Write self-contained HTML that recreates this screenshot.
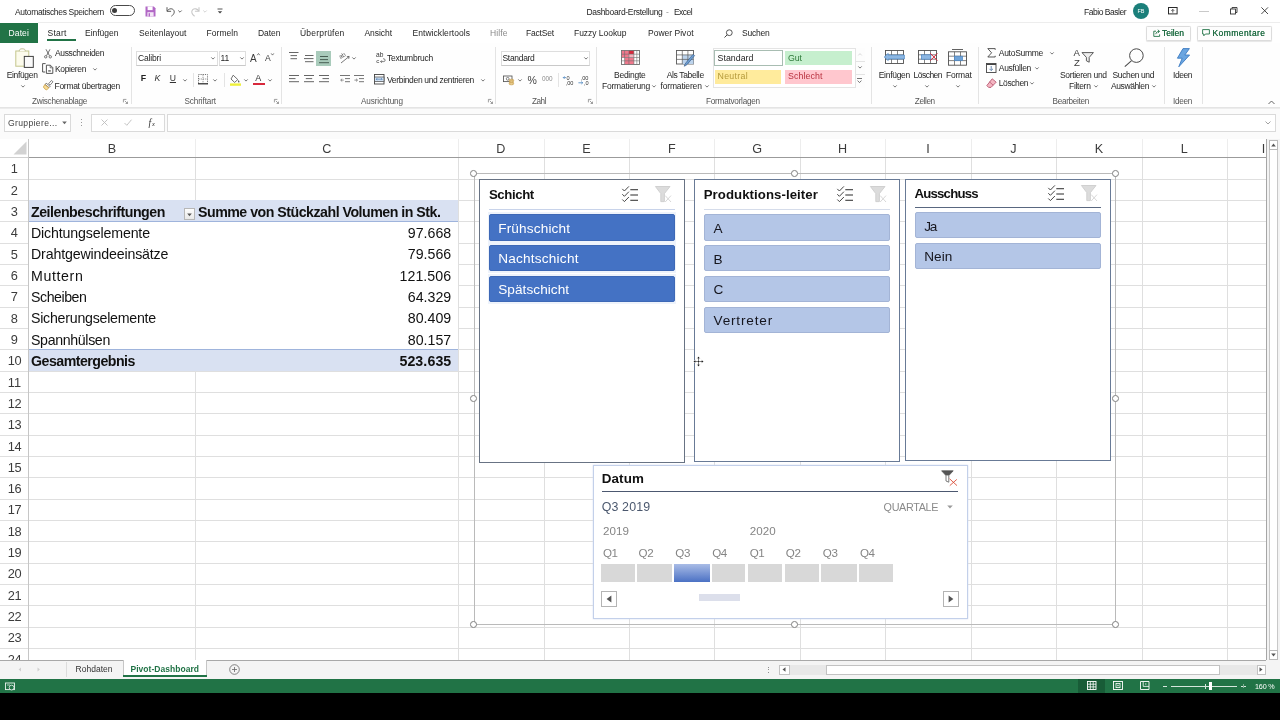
<!DOCTYPE html>
<html lang="de"><head><meta charset="utf-8"><title>Dashboard-Erstellung - Excel</title>
<style>
html,body{margin:0;padding:0;background:#fff;}
body{width:1280px;height:720px;overflow:hidden;position:relative;font-family:"Liberation Sans",sans-serif;}
#app{position:absolute;left:0;top:0;width:1280px;height:720px;overflow:hidden;background:#fff;will-change:transform;}
#app div,#app span.t,#app svg{position:absolute;box-sizing:border-box;}
#app span.t{white-space:nowrap;}
#app svg{overflow:visible;}
</style></head><body><div id="app">
<div style="left:0px;top:0px;width:1280px;height:22px;background:#fff;"></div>
<span class="t" style="left:15.00px;top:6.55px;font-size:8.5px;line-height:11px;color:#1f1f1f;letter-spacing:-0.321px;">Automatisches Speichern</span>
<div style="left:109.5px;top:5px;width:25px;height:11px;border:0.9px solid #4a4a4a;border-radius:6px;background:#fff;"></div>
<div style="left:112.3px;top:7.9px;width:5.2px;height:5.2px;background:#3c3c3c;border-radius:50%;"></div>
<svg style="left:145px;top:5.5px;" width="11" height="11" viewBox="0 0 11 11"><path d="M0.5 0.5H8.8L10.5 2.2V10.5H0.5Z" fill="#b268c6"/><rect x="2.6" y="0.5" width="5" height="3.6" fill="#fff"/><rect x="2.4" y="6.2" width="6.2" height="4.3" fill="#f3e6f6"/><rect x="3.6" y="7.2" width="1.4" height="3.3" fill="#b268c6"/></svg>
<svg style="left:164.5px;top:5.5px;" width="11" height="11" viewBox="0 0 11 11"><path d="M2 1.2V5.3H6.1" fill="none" stroke="#505050" stroke-width="0.95"/><path d="M2.2 5.1C3.6 2.6 6.6 2.1 8.3 3.7C10 5.4 9.4 8.2 6.4 10.2" fill="none" stroke="#505050" stroke-width="0.95"/></svg>
<svg style="left:177.5px;top:9.5px;" width="4" height="3" viewBox="0 0 4 3"><path d="M0.3 0.5L2 2.2L3.7 0.5" fill="none" stroke="#444" stroke-width="0.8"/></svg>
<svg style="left:189.5px;top:5.5px;" width="11" height="11" viewBox="0 0 11 11"><path d="M9 1.2V5.3H4.9" fill="none" stroke="#c8c8c8" stroke-width="1.1"/><path d="M8.8 5.1C7.4 2.6 4.4 2.1 2.7 3.7C1 5.4 1.6 8.2 4.6 10.2" fill="none" stroke="#c8c8c8" stroke-width="1.1"/></svg>
<svg style="left:203px;top:9.5px;" width="4" height="3" viewBox="0 0 4 3"><path d="M0.3 0.5L2 2.2L3.7 0.5" fill="none" stroke="#c8c8c8" stroke-width="0.8"/></svg>
<svg style="left:216.5px;top:7.5px;" width="6" height="7" viewBox="0 0 6 7"><path d="M0.5 1H5.5" stroke="#444" stroke-width="0.9"/><path d="M0.8 3.2L3 5.6L5.2 3.2Z" fill="#444"/></svg>
<span class="t" style="left:586.50px;top:6.55px;font-size:8.5px;line-height:11px;color:#1f1f1f;letter-spacing:-0.310px;">Dashboard-Erstellung</span>
<span class="t" style="left:666.00px;top:6.55px;font-size:8.5px;line-height:11px;color:#999;">-</span>
<span class="t" style="left:674.00px;top:6.55px;font-size:8.5px;line-height:11px;color:#1f1f1f;letter-spacing:-0.557px;">Excel</span>
<span class="t" style="left:1084.00px;top:6.55px;font-size:8.5px;line-height:11px;color:#1f1f1f;letter-spacing:-0.476px;">Fabio Basler</span>
<div style="left:1133px;top:3px;width:16px;height:16px;background:#1b7f7a;border-radius:50%;"></div>
<span class="t" style="left:1137.49px;top:7.70px;font-size:5.5px;line-height:7px;color:#fff;">FB</span>
<svg style="left:1167.5px;top:7px;" width="10" height="7.5" viewBox="0 0 10 7.5"><rect x="0.5" y="0.5" width="8.6" height="6.4" fill="none" stroke="#2a2a2a" stroke-width="1"/><path d="M4.8 5.6V2.6M3.4 3.8L4.8 2.4L6.2 3.8" fill="none" stroke="#2a2a2a" stroke-width="0.8"/></svg>
<div style="left:1199px;top:11px;width:9.5px;height:1.2px;background:#c9c9c9;"></div>
<svg style="left:1230px;top:7px;" width="8" height="8" viewBox="0 0 8 8"><rect x="0.5" y="2" width="5" height="5" fill="none" stroke="#333" stroke-width="0.9"/><path d="M2 2V0.5H7V5.5H5.5" fill="none" stroke="#333" stroke-width="0.9"/></svg>
<svg style="left:1261px;top:7.3px;" width="7.4" height="7.4" viewBox="0 0 7.4 7.4"><path d="M0.4 0.4L7 7M7 0.4L0.4 7" stroke="#333" stroke-width="0.9"/></svg>
<div style="left:0px;top:22px;width:1280px;height:21px;background:#fff;"></div>
<div style="left:38px;top:22px;width:1242px;height:1px;background:#ededed;"></div>
<div style="left:0px;top:22.5px;width:38px;height:20.5px;background:#217346;"></div>
<span class="t" style="left:8.50px;top:28.05px;font-size:8.5px;line-height:11px;color:#fff;letter-spacing:0.132px;">Datei</span>
<span class="t" style="left:47.50px;top:28.05px;font-size:8.5px;line-height:11px;color:#1f1f1f;letter-spacing:0.210px;">Start</span>
<span class="t" style="left:85.00px;top:28.05px;font-size:8.5px;line-height:11px;color:#1f1f1f;letter-spacing:-0.007px;">Einfügen</span>
<span class="t" style="left:139.00px;top:28.05px;font-size:8.5px;line-height:11px;color:#1f1f1f;letter-spacing:0.060px;">Seitenlayout</span>
<span class="t" style="left:206.50px;top:28.05px;font-size:8.5px;line-height:11px;color:#1f1f1f;letter-spacing:0.047px;">Formeln</span>
<span class="t" style="left:258.00px;top:28.05px;font-size:8.5px;line-height:11px;color:#1f1f1f;letter-spacing:-0.036px;">Daten</span>
<span class="t" style="left:300.00px;top:28.05px;font-size:8.5px;line-height:11px;color:#1f1f1f;letter-spacing:0.198px;">Überprüfen</span>
<span class="t" style="left:364.50px;top:28.05px;font-size:8.5px;line-height:11px;color:#1f1f1f;letter-spacing:-0.053px;">Ansicht</span>
<span class="t" style="left:412.50px;top:28.05px;font-size:8.5px;line-height:11px;color:#1f1f1f;letter-spacing:0.054px;">Entwicklertools</span>
<span class="t" style="left:490.00px;top:28.05px;font-size:8.5px;line-height:11px;color:#8a8a8a;letter-spacing:0.099px;">Hilfe</span>
<span class="t" style="left:526.00px;top:28.05px;font-size:8.5px;line-height:11px;color:#1f1f1f;letter-spacing:-0.184px;">FactSet</span>
<span class="t" style="left:574.00px;top:28.05px;font-size:8.5px;line-height:11px;color:#1f1f1f;letter-spacing:-0.034px;">Fuzzy Lookup</span>
<span class="t" style="left:648.00px;top:28.05px;font-size:8.5px;line-height:11px;color:#1f1f1f;letter-spacing:0.014px;">Power Pivot</span>
<div style="left:47px;top:39px;width:28.5px;height:1.5px;background:#217346;"></div>
<svg style="left:724px;top:28.5px;" width="9" height="9" viewBox="0 0 9 9"><circle cx="5.3" cy="3.7" r="2.9" fill="none" stroke="#444" stroke-width="0.9"/><path d="M3.2 5.8L0.5 8.5" stroke="#444" stroke-width="1"/></svg>
<span class="t" style="left:742.00px;top:28.05px;font-size:8.5px;line-height:11px;color:#1f1f1f;letter-spacing:-0.221px;">Suchen</span>
<div style="left:1146px;top:26px;width:45px;height:14.5px;border:1px solid #dcdcdc;background:#fdfdfd;border-radius:1.5px;box-shadow:0 0.5px 1px #e6e6e6;"></div>
<svg style="left:1152.5px;top:29px;" width="8" height="8" viewBox="0 0 8 8"><path d="M3 2.2H0.8V7.4H6.6V5.4" fill="none" stroke="#217346" stroke-width="0.9"/><path d="M2.8 5.2C3 3.4 4.2 2.4 6 2.4M4.8 0.8L6.6 2.4L4.8 4" fill="none" stroke="#217346" stroke-width="0.9"/></svg>
<span class="t" style="left:1162.00px;top:28.05px;font-size:8.5px;line-height:11px;color:#1c6b40;letter-spacing:-0.035px;text-shadow:0 0 0.4px #1c6b40;">Teilen</span>
<div style="left:1196.5px;top:26px;width:75px;height:14.5px;border:1px solid #dcdcdc;background:#fdfdfd;border-radius:1.5px;box-shadow:0 0.5px 1px #e6e6e6;"></div>
<svg style="left:1202px;top:29.2px;" width="8" height="8" viewBox="0 0 8 8"><path d="M0.6 0.6H7.4V5H3.4L1.8 6.8V5H0.6Z" fill="none" stroke="#217346" stroke-width="0.9"/></svg>
<span class="t" style="left:1212.50px;top:28.05px;font-size:8.5px;line-height:11px;color:#1c6b40;letter-spacing:0.434px;text-shadow:0 0 0.4px #1c6b40;">Kommentare</span>
<div style="left:0px;top:107px;width:1280px;height:31.5px;background:#fbfbfb;"></div>
<div style="left:0px;top:106.5px;width:1280px;height:2.5px;background:linear-gradient(#e0e0e0,#f0f0f0);"></div>
<div style="left:0px;top:110px;width:1280px;height:25.5px;background:#fbfbfb;"></div>
<div style="left:3.5px;top:114px;width:67.5px;height:17.5px;background:#fff;border:1px solid #dadada;"></div>
<span class="t" style="left:8.00px;top:117.60px;font-size:8.6px;line-height:11px;color:#444;letter-spacing:0.341px;">Gruppiere...</span>
<svg style="left:61.5px;top:120.5px;" width="5" height="4" viewBox="0 0 5 4"><path d="M0.2 0.5H4.8L2.5 3.3Z" fill="#666"/></svg>
<div style="left:81px;top:118.5px;width:1px;height:1px;background:#9a9a9a;"></div>
<div style="left:81px;top:121.5px;width:1px;height:1px;background:#9a9a9a;"></div>
<div style="left:81px;top:124.5px;width:1px;height:1px;background:#9a9a9a;"></div>
<div style="left:91px;top:114px;width:73.5px;height:17.5px;background:#fff;border:1px solid #dadada;"></div>
<svg style="left:100.5px;top:119px;" width="7" height="7" viewBox="0 0 7 7"><path d="M0.5 0.5L6.5 6.5M6.5 0.5L0.5 6.5" stroke="#bdbdbd" stroke-width="0.9"/></svg>
<svg style="left:124px;top:119px;" width="8" height="7" viewBox="0 0 8 7"><path d="M0.5 4L2.8 6.3L7.5 0.7" fill="none" stroke="#bdbdbd" stroke-width="0.9"/></svg>
<span class="t" style="left:148.50px;top:116.50px;font-size:9.5px;line-height:12px;color:#333;font-style:italic;font-family:'Liberation Serif',serif;">f</span>
<span class="t" style="left:152.00px;top:119.80px;font-size:6.5px;line-height:8px;color:#333;font-style:italic;font-family:'Liberation Serif',serif;">x</span>
<div style="left:167px;top:114px;width:1108.5px;height:17.5px;background:#fff;border:1px solid #dadada;"></div>
<svg style="left:1264.5px;top:120.5px;" width="6" height="4" viewBox="0 0 6 4"><path d="M0.5 0.5L3 3L5.5 0.5" fill="none" stroke="#8a8a8a" stroke-width="0.8"/></svg>
<div style="left:0px;top:43px;width:1280px;height:64px;background:#fefefe;"></div>
<svg style="left:15px;top:48px;" width="19.5" height="20" viewBox="0 0 19.5 20"><rect x="0.8" y="3" width="13" height="15.2" fill="#fcfbec" stroke="#c4c58c" stroke-width="1"/><path d="M4.4 3.2V2.4C4.4 0.2 10.2 0.2 10.2 2.4V3.2" fill="#fbfbf3" stroke="#b7b98a" stroke-width="0.9"/><rect x="9.3" y="8.4" width="9" height="11" fill="#fafafa" stroke="#3f3f3f" stroke-width="1"/></svg>
<span class="t" style="left:6.75px;top:70.05px;font-size:8.5px;line-height:11px;color:#1f1f1f;letter-spacing:-0.350px;">Einfügen</span>
<svg style="left:20.5px;top:84.7px;" width="4" height="3" viewBox="0 0 4 3"><path d="M0.3 0.4L2 2.1L3.7 0.4" fill="none" stroke="#555" stroke-width="0.8"/></svg>
<svg style="left:43.6px;top:48.6px;" width="8" height="9.6" viewBox="0 0 8 9.6"><path d="M2 0.3L5.4 6.6M6 0.3L2.6 6.6" stroke="#4a4a4a" stroke-width="0.8" fill="none"/><circle cx="1.7" cy="7.8" r="1.2" fill="none" stroke="#4a4a4a" stroke-width="0.75"/><circle cx="6.3" cy="7.8" r="1.2" fill="none" stroke="#4a4a4a" stroke-width="0.75"/></svg>
<span class="t" style="left:55.00px;top:48.05px;font-size:8.5px;line-height:11px;color:#1f1f1f;letter-spacing:-0.366px;">Ausschneiden</span>
<svg style="left:42px;top:63.3px;" width="11.5" height="11" viewBox="0 0 11.5 11"><path d="M3.6 0.6H0.6V9H3.2" fill="none" stroke="#444" stroke-width="0.9"/><path d="M4.4 2.2H8.4L10.8 4.6V10.4H4.4Z" fill="#fff" stroke="#444" stroke-width="0.9"/><path d="M8.2 2.4V4.8H10.6" fill="none" stroke="#444" stroke-width="0.7"/><rect x="6.2" y="7.2" width="2.6" height="1.4" fill="#666"/></svg>
<span class="t" style="left:55.00px;top:64.05px;font-size:8.5px;line-height:11px;color:#1f1f1f;letter-spacing:-0.378px;">Kopieren</span>
<svg style="left:93px;top:68.2px;" width="4" height="3" viewBox="0 0 4 3"><path d="M0.3 0.4L2 2.1L3.7 0.4" fill="none" stroke="#555" stroke-width="0.8"/></svg>
<svg style="left:42.5px;top:79.5px;" width="10.5" height="10.5" viewBox="0 0 10.5 10.5"><path d="M8.4 0.5L10 1.8L7.2 5L5.6 3.7Z" fill="#fff" stroke="#555" stroke-width="0.7"/><path d="M3.2 3.2L7.2 6.4L6 7.6L2 4.4Z" fill="#fff" stroke="#444" stroke-width="0.7"/><path d="M1.8 4.6L5.8 7.8L3.6 10C2.2 9.4 1 8.4 0.4 7Z" fill="#f6dc9a" stroke="#c8962e" stroke-width="0.7"/></svg>
<span class="t" style="left:54.50px;top:80.55px;font-size:8.5px;line-height:11px;color:#1f1f1f;letter-spacing:-0.288px;">Format übertragen</span>
<span class="t" style="left:32.00px;top:95.90px;font-size:8.2px;line-height:11px;color:#555;letter-spacing:-0.304px;">Zwischenablage</span>
<svg style="left:122.5px;top:98.5px;" width="5" height="5" viewBox="0 0 5 5"><path d="M0.4 3.4V0.4H3.4" fill="none" stroke="#777" stroke-width="0.7"/><path d="M1.8 1.8L4.4 4.4M4.5 2.6V4.5H2.6" fill="none" stroke="#777" stroke-width="0.7"/></svg>
<div style="left:130.5px;top:47px;width:1px;height:57px;background:#e4e4e4;"></div>
<div style="left:136px;top:51px;width:81.5px;height:14.5px;background:#fff;border:1px solid #dedede;border-bottom-color:#c9c9c9;"></div>
<span class="t" style="left:138.00px;top:53.35px;font-size:8.5px;line-height:11px;color:#1f1f1f;letter-spacing:-0.155px;">Calibri</span>
<svg style="left:211px;top:57.2px;" width="4" height="3" viewBox="0 0 4 3"><path d="M0.3 0.4L2 2.1L3.7 0.4" fill="none" stroke="#555" stroke-width="0.8"/></svg>
<div style="left:218.5px;top:51px;width:27.5px;height:14.5px;background:#fff;border:1px solid #dedede;border-bottom-color:#c9c9c9;"></div>
<span class="t" style="left:220.50px;top:53.35px;font-size:8.5px;line-height:11px;color:#1f1f1f;">11</span>
<svg style="left:240px;top:57.2px;" width="4" height="3" viewBox="0 0 4 3"><path d="M0.3 0.4L2 2.1L3.7 0.4" fill="none" stroke="#555" stroke-width="0.8"/></svg>
<span class="t" style="left:250.00px;top:51.50px;font-size:10px;line-height:13px;color:#3b3b3b;">A</span>
<svg style="left:256.5px;top:52.5px;" width="3" height="2.5" viewBox="0 0 3 2.5"><path d="M0.2 2.2L1.5 0.5L2.8 2.2" fill="none" stroke="#444" stroke-width="0.7"/></svg>
<span class="t" style="left:265.00px;top:53.10px;font-size:8.6px;line-height:11px;color:#3b3b3b;">A</span>
<svg style="left:271px;top:52.5px;" width="3" height="2.5" viewBox="0 0 3 2.5"><path d="M0.2 0.4L1.5 2.1L2.8 0.4" fill="none" stroke="#444" stroke-width="0.7"/></svg>
<span class="t" style="left:140.80px;top:73.30px;font-size:8.8px;line-height:11px;color:#222;font-weight:700;">F</span>
<span class="t" style="left:154.50px;top:73.30px;font-size:8.8px;line-height:11px;color:#333;font-style:italic;">K</span>
<span class="t" style="left:169.80px;top:73.10px;font-size:8.6px;line-height:11px;color:#333;text-decoration:underline;">U</span>
<svg style="left:182.5px;top:78.7px;" width="4" height="3" viewBox="0 0 4 3"><path d="M0.3 0.4L2 2.1L3.7 0.4" fill="none" stroke="#555" stroke-width="0.8"/></svg>
<div style="left:192.5px;top:73px;width:1px;height:14px;background:#e4e4e4;"></div>
<svg style="left:198px;top:74px;" width="10" height="10.5" viewBox="0 0 10 10.5"><path d="M0.5 9.5V0.5H9.5V9.5" fill="none" stroke="#666" stroke-width="0.9" stroke-dasharray="1.2 1"/><path d="M5 0.5V9.5M0.5 5H9.5" stroke="#777" stroke-width="0.8" stroke-dasharray="1.2 1"/><path d="M0 9.8H10" stroke="#222" stroke-width="1.2"/></svg>
<svg style="left:212.5px;top:78.7px;" width="4" height="3" viewBox="0 0 4 3"><path d="M0.3 0.4L2 2.1L3.7 0.4" fill="none" stroke="#555" stroke-width="0.8"/></svg>
<div style="left:224px;top:73px;width:1px;height:14px;background:#e4e4e4;"></div>
<svg style="left:229.5px;top:73.5px;" width="11" height="12" viewBox="0 0 11 12"><path d="M3.2 1.2L7.8 5.6L4.6 8.4L1 5Z" fill="#fff" stroke="#555" stroke-width="0.85"/><path d="M8.6 6C9.4 7.2 9.8 7.8 9.2 8.4C8.6 8.8 8 8.4 8 7.8C8 7.2 8.3 6.6 8.6 6Z" fill="#555"/><rect x="0" y="9.4" width="11" height="2.4" fill="#eef03c"/></svg>
<svg style="left:243.5px;top:78.7px;" width="4" height="3" viewBox="0 0 4 3"><path d="M0.3 0.4L2 2.1L3.7 0.4" fill="none" stroke="#555" stroke-width="0.8"/></svg>
<span class="t" style="left:255.20px;top:72.00px;font-size:9px;line-height:12px;color:#333;">A</span>
<div style="left:253px;top:83px;width:11.5px;height:2.4px;background:#d8283c;"></div>
<svg style="left:268px;top:78.7px;" width="4" height="3" viewBox="0 0 4 3"><path d="M0.3 0.4L2 2.1L3.7 0.4" fill="none" stroke="#555" stroke-width="0.8"/></svg>
<span class="t" style="left:184.50px;top:95.90px;font-size:8.2px;line-height:11px;color:#555;letter-spacing:-0.131px;">Schriftart</span>
<svg style="left:273.5px;top:98.5px;" width="5" height="5" viewBox="0 0 5 5"><path d="M0.4 3.4V0.4H3.4" fill="none" stroke="#777" stroke-width="0.7"/><path d="M1.8 1.8L4.4 4.4M4.5 2.6V4.5H2.6" fill="none" stroke="#777" stroke-width="0.7"/></svg>
<div style="left:281px;top:47px;width:1px;height:57px;background:#e4e4e4;"></div>
<svg style="left:289px;top:52.3px;" width="10" height="8" viewBox="0 0 10 8"><path d="M0 0.5H9.5" stroke="#555" stroke-width="0.9"/><path d="M1.5 3.6H8" stroke="#555" stroke-width="0.9"/><path d="M1.5 6.7H8" stroke="#555" stroke-width="0.9"/></svg>
<svg style="left:304px;top:54.6px;" width="10" height="8" viewBox="0 0 10 8"><path d="M1 0.5H9.5" stroke="#555" stroke-width="0.9"/><path d="M0 3.6H9.5" stroke="#555" stroke-width="0.9"/><path d="M1 6.7H9.5" stroke="#555" stroke-width="0.9"/></svg>
<div style="left:316px;top:51px;width:15px;height:15px;background:#a9cbbb;"></div>
<svg style="left:319px;top:56.4px;" width="10" height="8" viewBox="0 0 10 8"><path d="M1 0.5H9" stroke="#3d5247" stroke-width="0.9"/><path d="M1 3.6H9" stroke="#3d5247" stroke-width="0.9"/><path d="M0 6.7H10" stroke="#3d5247" stroke-width="0.9"/></svg>
<svg style="left:339px;top:52px;" width="11" height="12" viewBox="0 0 11 12"><text x="0.5" y="6" font-size="6.2" fill="#555" font-family="Liberation Sans" transform="rotate(-30 3 5)">ab</text><path d="M2 11L10 4.6M10.2 4.4L7.8 4.7M10.2 4.4L9.7 6.8" stroke="#555" stroke-width="0.8" fill="none"/></svg>
<svg style="left:352px;top:57.2px;" width="4" height="3" viewBox="0 0 4 3"><path d="M0.3 0.4L2 2.1L3.7 0.4" fill="none" stroke="#555" stroke-width="0.8"/></svg>
<svg style="left:375.5px;top:51.5px;" width="10" height="12.5" viewBox="0 0 10 12.5"><text x="0" y="5.4" font-size="6.6" fill="#333" font-family="Liberation Sans">ab</text><text x="0.2" y="11.2" font-size="6.2" fill="#333" font-family="Liberation Sans">c</text><path d="M4.6 9.6H7.8C9.6 9.6 9.6 6.8 7.8 6.8H7" fill="none" stroke="#555" stroke-width="0.75"/><path d="M5.8 8.4L4.6 9.6L5.8 10.8" fill="none" stroke="#555" stroke-width="0.75"/></svg>
<span class="t" style="left:387.00px;top:53.35px;font-size:8.5px;line-height:11px;color:#1f1f1f;letter-spacing:-0.241px;">Textumbruch</span>
<svg style="left:289px;top:75px;" width="10" height="8" viewBox="0 0 10 8"><path d="M0 0.5H10" stroke="#555" stroke-width="0.9"/><path d="M0 3.6H6.5" stroke="#555" stroke-width="0.9"/><path d="M0 6.7H10" stroke="#555" stroke-width="0.9"/></svg>
<svg style="left:304px;top:75px;" width="10" height="8" viewBox="0 0 10 8"><path d="M0 0.5H10" stroke="#555" stroke-width="0.9"/><path d="M1.8 3.6H8.2" stroke="#555" stroke-width="0.9"/><path d="M0 6.7H10" stroke="#555" stroke-width="0.9"/></svg>
<svg style="left:319px;top:75px;" width="10" height="8" viewBox="0 0 10 8"><path d="M0 0.5H10" stroke="#555" stroke-width="0.9"/><path d="M3.5 3.6H10" stroke="#555" stroke-width="0.9"/><path d="M0 6.7H10" stroke="#555" stroke-width="0.9"/></svg>
<svg style="left:339.5px;top:74.8px;" width="10" height="9" viewBox="0 0 10 9"><path d="M0 0.5H10M5 3.6H10M5 6.7H10" stroke="#666" stroke-width="0.9"/><path d="M3.8 5.1H0.8M2.2 3.7L0.7 5.1L2.2 6.5" stroke="#777" stroke-width="0.8" fill="none"/></svg>
<svg style="left:354px;top:74.8px;" width="10" height="9" viewBox="0 0 10 9"><path d="M0 0.5H10M5 3.6H10M5 6.7H10" stroke="#666" stroke-width="0.9"/><path d="M0.4 5.1H3.4M2 3.7L3.5 5.1L2 6.5" stroke="#777" stroke-width="0.8" fill="none"/></svg>
<svg style="left:374px;top:74px;" width="10.5" height="10.5" viewBox="0 0 10.5 10.5"><rect x="0.5" y="0.5" width="9.5" height="9.5" fill="#fff" stroke="#444" stroke-width="0.9"/><rect x="0.5" y="3" width="9.5" height="4.4" fill="#d4e4f4" stroke="#444" stroke-width="0.7"/><path d="M2.2 5.2H8.2M3.2 4.2L2.2 5.2L3.2 6.2M7.2 4.2L8.2 5.2L7.2 6.2" stroke="#4a7ab0" stroke-width="0.7" fill="none"/></svg>
<span class="t" style="left:387.00px;top:74.75px;font-size:8.5px;line-height:11px;color:#1f1f1f;letter-spacing:-0.332px;">Verbinden und zentrieren</span>
<svg style="left:481px;top:78.7px;" width="4" height="3" viewBox="0 0 4 3"><path d="M0.3 0.4L2 2.1L3.7 0.4" fill="none" stroke="#555" stroke-width="0.8"/></svg>
<span class="t" style="left:361.00px;top:95.90px;font-size:8.2px;line-height:11px;color:#555;letter-spacing:-0.118px;">Ausrichtung</span>
<svg style="left:487.5px;top:98.5px;" width="5" height="5" viewBox="0 0 5 5"><path d="M0.4 3.4V0.4H3.4" fill="none" stroke="#777" stroke-width="0.7"/><path d="M1.8 1.8L4.4 4.4M4.5 2.6V4.5H2.6" fill="none" stroke="#777" stroke-width="0.7"/></svg>
<div style="left:495px;top:47px;width:1px;height:57px;background:#e4e4e4;"></div>
<div style="left:500.5px;top:51px;width:89px;height:14.5px;background:#fff;border:1px solid #dedede;border-bottom-color:#c9c9c9;"></div>
<span class="t" style="left:502.50px;top:53.35px;font-size:8.5px;line-height:11px;color:#1f1f1f;letter-spacing:-0.312px;">Standard</span>
<svg style="left:583.5px;top:57.2px;" width="4" height="3" viewBox="0 0 4 3"><path d="M0.3 0.4L2 2.1L3.7 0.4" fill="none" stroke="#555" stroke-width="0.8"/></svg>
<svg style="left:502.5px;top:74.5px;" width="12" height="10.5" viewBox="0 0 12 10.5"><rect x="0.5" y="1" width="8.5" height="5.6" fill="#fff" stroke="#555" stroke-width="0.85"/><circle cx="4.7" cy="3.8" r="1.4" fill="none" stroke="#555" stroke-width="0.7"/><ellipse cx="8.4" cy="5.2" rx="2.4" ry="1" fill="#f3d9a0" stroke="#b98a2e" stroke-width="0.6"/><ellipse cx="8.4" cy="7" rx="2.4" ry="1" fill="#f3d9a0" stroke="#b98a2e" stroke-width="0.6"/><ellipse cx="8.4" cy="8.8" rx="2.4" ry="1" fill="#f3d9a0" stroke="#b98a2e" stroke-width="0.6"/></svg>
<svg style="left:517.5px;top:78.7px;" width="4" height="3" viewBox="0 0 4 3"><path d="M0.3 0.4L2 2.1L3.7 0.4" fill="none" stroke="#555" stroke-width="0.8"/></svg>
<span class="t" style="left:527.50px;top:72.70px;font-size:10.5px;line-height:14px;color:#444;">%</span>
<span class="t" style="left:542.00px;top:75.30px;font-size:6.4px;line-height:8px;color:#8a8a8a;">000</span>
<div style="left:557.5px;top:73px;width:1px;height:14px;background:#e4e4e4;"></div>
<svg style="left:562.5px;top:74.5px;" width="11" height="10.5" viewBox="0 0 11 10.5"><text x="3.6" y="4.8" font-size="5.6" fill="#333" font-family="Liberation Sans">0</text><text x="2.6" y="10" font-size="5.6" fill="#333" font-family="Liberation Sans">,00</text><path d="M3 2.6H0.4M1.5 1.4L0.3 2.6L1.5 3.8" stroke="#2a6fb5" stroke-width="0.7" fill="none"/></svg>
<svg style="left:577.5px;top:74.5px;" width="11" height="10.5" viewBox="0 0 11 10.5"><text x="2.6" y="4.8" font-size="5.6" fill="#333" font-family="Liberation Sans">,00</text><text x="6" y="10" font-size="5.6" fill="#333" font-family="Liberation Sans">,0</text><path d="M0.4 7.8H4.6M3.4 6.6L4.7 7.8L3.4 9" stroke="#2a6fb5" stroke-width="0.7" fill="none"/></svg>
<span class="t" style="left:532.00px;top:95.90px;font-size:8.2px;line-height:11px;color:#555;letter-spacing:-0.488px;">Zahl</span>
<svg style="left:587.5px;top:98.5px;" width="5" height="5" viewBox="0 0 5 5"><path d="M0.4 3.4V0.4H3.4" fill="none" stroke="#777" stroke-width="0.7"/><path d="M1.8 1.8L4.4 4.4M4.5 2.6V4.5H2.6" fill="none" stroke="#777" stroke-width="0.7"/></svg>
<div style="left:595.5px;top:47px;width:1px;height:57px;background:#e4e4e4;"></div>
<svg style="left:620.5px;top:50px;" width="19" height="15" viewBox="0 0 19 15"><rect x="0.5" y="0.5" width="18" height="14" fill="#fff" stroke="#6e6e6e" stroke-width="0.9"/><rect x="0.9" y="0.9" width="7" height="6.6" fill="#f0788c"/><rect x="7.9" y="0.9" width="5" height="3.3" fill="#d8283c"/><rect x="3.6" y="7.5" width="9.3" height="6.6" fill="#f0788c"/><rect x="7.9" y="4.2" width="5" height="3.3" fill="#f6b0bc"/><path d="M0.5 4.2H18.5M0.5 7.5H18.5M0.5 10.8H18.5M3.6 0.5V14.5M7.9 0.5V14.5M12.9 0.5V14.5M15.8 0.5V14.5" stroke="#6e6e6e" stroke-width="0.6"/></svg>
<span class="t" style="left:614.00px;top:70.05px;font-size:8.5px;line-height:11px;color:#1f1f1f;letter-spacing:-0.257px;">Bedingte</span>
<span class="t" style="left:602.00px;top:81.05px;font-size:8.5px;line-height:11px;color:#1f1f1f;letter-spacing:-0.212px;">Formatierung</span>
<svg style="left:652px;top:85.2px;" width="4" height="3" viewBox="0 0 4 3"><path d="M0.3 0.4L2 2.1L3.7 0.4" fill="none" stroke="#555" stroke-width="0.8"/></svg>
<svg style="left:676px;top:50px;" width="20" height="17" viewBox="0 0 20 17"><rect x="0.5" y="0.5" width="17" height="13.5" fill="#fff" stroke="#5a5a5a" stroke-width="0.9"/><rect x="6.3" y="4.9" width="11.2" height="9.1" fill="#bcd3ec"/><path d="M0.5 4.9H17.5M0.5 9.4H17.5M6.3 0.5V14M11.9 0.5V14" stroke="#5a5a5a" stroke-width="0.7"/><path d="M18.6 5.6L12 13.4C11 14.6 9.6 15.8 8.2 16.2C8.6 14.8 9.4 13.4 10.4 12.2L17 4.4Z" fill="#6f9fd3" stroke="#3a5f8c" stroke-width="0.7"/></svg>
<span class="t" style="left:666.75px;top:70.05px;font-size:8.5px;line-height:11px;color:#1f1f1f;letter-spacing:-0.359px;">Als Tabelle</span>
<span class="t" style="left:660.50px;top:81.05px;font-size:8.5px;line-height:11px;color:#1f1f1f;letter-spacing:-0.158px;">formatieren</span>
<svg style="left:704.75px;top:85.2px;" width="4" height="3" viewBox="0 0 4 3"><path d="M0.3 0.4L2 2.1L3.7 0.4" fill="none" stroke="#555" stroke-width="0.8"/></svg>
<div style="left:712.5px;top:47.5px;width:152.5px;height:40px;background:#fff;border:1px solid #e4e4e4;"></div>
<div style="left:713.75px;top:49.5px;width:68.75px;height:16.5px;background:#fff;border:1.5px solid #a8bdb2;"></div>
<span class="t" style="left:717.50px;top:52.90px;font-size:8.8px;line-height:11px;color:#1e1e1e;letter-spacing:0.036px;">Standard</span>
<div style="left:785px;top:51px;width:67px;height:14px;background:#c6efce;"></div>
<span class="t" style="left:788.00px;top:52.90px;font-size:8.8px;line-height:11px;color:#2f7a3a;letter-spacing:-0.061px;">Gut</span>
<div style="left:715px;top:69.5px;width:66px;height:14.25px;background:#ffeb9c;"></div>
<span class="t" style="left:717.50px;top:71.40px;font-size:8.8px;line-height:11px;color:#b59a3a;letter-spacing:0.305px;">Neutral</span>
<div style="left:785px;top:69.5px;width:67px;height:14.25px;background:#ffc7ce;"></div>
<span class="t" style="left:788.00px;top:71.40px;font-size:8.8px;line-height:11px;color:#b8323f;letter-spacing:0.094px;">Schlecht</span>
<div style="left:854.5px;top:47.5px;width:10.5px;height:40px;background:#fdfdfd;border-left:1px solid #e4e4e4;"></div>
<div style="left:854.5px;top:60.5px;width:10.5px;height:1px;background:#e4e4e4;"></div>
<div style="left:854.5px;top:73.5px;width:10.5px;height:1px;background:#e4e4e4;"></div>
<svg style="left:857.5px;top:52.5px;" width="4" height="3" viewBox="0 0 4 3"><path d="M0.3 2.4L2 0.6L3.7 2.4" fill="none" stroke="#cfcfcf" stroke-width="0.8"/></svg>
<svg style="left:857.5px;top:65.7px;" width="4" height="3" viewBox="0 0 4 3"><path d="M0.3 0.4L2 2.1L3.7 0.4" fill="none" stroke="#555" stroke-width="0.8"/></svg>
<svg style="left:857.2px;top:77.5px;" width="5" height="6" viewBox="0 0 5 6"><path d="M0 0.5H5" stroke="#555" stroke-width="0.8"/><path d="M0.6 2.6L2.5 4.6L4.4 2.6" fill="none" stroke="#555" stroke-width="0.8"/></svg>
<span class="t" style="left:706.00px;top:95.90px;font-size:8.2px;line-height:11px;color:#555;letter-spacing:-0.244px;">Formatvorlagen</span>
<div style="left:871px;top:47px;width:1px;height:57px;background:#e4e4e4;"></div>
<svg style="left:884.4px;top:49px;" width="21" height="17" viewBox="0 0 21 17"><rect x="1.5" y="1.5" width="18" height="13" fill="#fff" stroke="#4f4f4f" stroke-width="0.9"/><path d="M1.5 5.8H19.5M1.5 10.2H19.5M7.5 1.5V14.5M13.5 1.5V14.5" stroke="#4f4f4f" stroke-width="0.7"/><path d="M0.2 8L4.2 4.4V6H20.4V10H4.2V11.6Z" fill="#8db7e2" stroke="#4a86c5" stroke-width="0.7"/></svg>
<span class="t" style="left:878.70px;top:70.05px;font-size:8.5px;line-height:11px;color:#1f1f1f;letter-spacing:-0.282px;">Einfügen</span>
<svg style="left:892.5px;top:84.7px;" width="4" height="3" viewBox="0 0 4 3"><path d="M0.3 0.4L2 2.1L3.7 0.4" fill="none" stroke="#555" stroke-width="0.8"/></svg>
<svg style="left:917.4px;top:49px;" width="21" height="17" viewBox="0 0 21 17"><rect x="1.5" y="1.5" width="18" height="13" fill="#fff" stroke="#4f4f4f" stroke-width="0.9"/><path d="M1.5 5.8H19.5M1.5 10.2H19.5M7.5 1.5V14.5M13.5 1.5V14.5" stroke="#4f4f4f" stroke-width="0.7"/><rect x="4.4" y="5.8" width="9.4" height="4.4" fill="#8db7e2" stroke="#4a86c5" stroke-width="0.7"/><path d="M13.4 4.4L20.4 11.6M20.4 4.4L13.4 11.6" stroke="#d8283c" stroke-width="1"/></svg>
<span class="t" style="left:913.50px;top:70.05px;font-size:8.5px;line-height:11px;color:#1f1f1f;letter-spacing:-0.519px;">Löschen</span>
<svg style="left:925px;top:84.7px;" width="4" height="3" viewBox="0 0 4 3"><path d="M0.3 0.4L2 2.1L3.7 0.4" fill="none" stroke="#555" stroke-width="0.8"/></svg>
<svg style="left:947.4px;top:49px;" width="21" height="17" viewBox="0 0 21 17"><path d="M5 0.5H16" stroke="#4f4f4f" stroke-width="0.9"/><rect x="1.5" y="2.8" width="18" height="13.4" fill="#fff" stroke="#4f4f4f" stroke-width="0.9"/><path d="M1.5 7.2H19.5M1.5 11.6H19.5M7.5 2.8V16.2M13.5 2.8V16.2" stroke="#4f4f4f" stroke-width="0.7"/><rect x="7.5" y="7.2" width="8" height="4.4" fill="#6fa3d8" stroke="#4a86c5" stroke-width="0.7"/></svg>
<span class="t" style="left:946.00px;top:70.05px;font-size:8.5px;line-height:11px;color:#1f1f1f;letter-spacing:-0.236px;">Format</span>
<svg style="left:956.4px;top:84.7px;" width="4" height="3" viewBox="0 0 4 3"><path d="M0.3 0.4L2 2.1L3.7 0.4" fill="none" stroke="#555" stroke-width="0.8"/></svg>
<span class="t" style="left:914.80px;top:95.90px;font-size:8.2px;line-height:11px;color:#555;letter-spacing:-0.389px;">Zellen</span>
<div style="left:978px;top:47px;width:1px;height:57px;background:#e4e4e4;"></div>
<svg style="left:987px;top:47.6px;" width="9" height="9.6" viewBox="0 0 9 9.6"><path d="M8.2 1.8V0.6H0.8L4.6 4.8L0.8 9H8.2V7.8" fill="none" stroke="#444" stroke-width="0.9" stroke-linejoin="miter"/></svg>
<span class="t" style="left:998.80px;top:47.55px;font-size:8.5px;line-height:11px;color:#1f1f1f;letter-spacing:-0.285px;">AutoSumme</span>
<svg style="left:1050px;top:51.7px;" width="4" height="3" viewBox="0 0 4 3"><path d="M0.3 0.4L2 2.1L3.7 0.4" fill="none" stroke="#555" stroke-width="0.8"/></svg>
<svg style="left:986px;top:63px;" width="10.5" height="10" viewBox="0 0 10.5 10"><rect x="0.5" y="0.5" width="9.5" height="9" fill="#fff" stroke="#444" stroke-width="0.9"/><path d="M0.5 1.4H10" stroke="#444" stroke-width="1.2"/><path d="M5.2 3V7.4M3.4 5.8L5.2 7.6L7 5.8" fill="none" stroke="#5a7fa8" stroke-width="0.9"/></svg>
<span class="t" style="left:998.80px;top:63.05px;font-size:8.5px;line-height:11px;color:#1f1f1f;letter-spacing:-0.307px;">Ausfüllen</span>
<svg style="left:1034.5px;top:67.2px;" width="4" height="3" viewBox="0 0 4 3"><path d="M0.3 0.4L2 2.1L3.7 0.4" fill="none" stroke="#555" stroke-width="0.8"/></svg>
<svg style="left:985.5px;top:78px;" width="11" height="10" viewBox="0 0 11 10"><path d="M6.2 0.8L10.2 4.2L5 9.4H2.6L0.8 7.6Z" fill="#f4b6c2" stroke="#b04a66" stroke-width="0.8"/><path d="M3.4 3.8L7.2 7.2" stroke="#b04a66" stroke-width="0.7"/></svg>
<span class="t" style="left:998.80px;top:78.05px;font-size:8.5px;line-height:11px;color:#1f1f1f;letter-spacing:-0.419px;">Löschen</span>
<svg style="left:1030px;top:82.2px;" width="4" height="3" viewBox="0 0 4 3"><path d="M0.3 0.4L2 2.1L3.7 0.4" fill="none" stroke="#555" stroke-width="0.8"/></svg>
<svg style="left:1073px;top:48px;" width="21" height="18.5" viewBox="0 0 21 18.5"><text x="0.6" y="8.4" font-size="9.6" fill="#3a3a3a" font-family="Liberation Sans">A</text><text x="1" y="17.6" font-size="9.6" fill="#3a3a3a" font-family="Liberation Sans">Z</text><path d="M9 4.6H20.4L16.2 9.4V14.2L13.4 12.8V9.4Z" fill="#eeeeee" stroke="#4a4a4a" stroke-width="0.9"/></svg>
<span class="t" style="left:1060.00px;top:70.05px;font-size:8.5px;line-height:11px;color:#1f1f1f;letter-spacing:-0.333px;">Sortieren und</span>
<span class="t" style="left:1069.00px;top:81.05px;font-size:8.5px;line-height:11px;color:#1f1f1f;letter-spacing:-0.288px;">Filtern</span>
<svg style="left:1093.5px;top:85.2px;" width="4" height="3" viewBox="0 0 4 3"><path d="M0.3 0.4L2 2.1L3.7 0.4" fill="none" stroke="#555" stroke-width="0.8"/></svg>
<svg style="left:1124px;top:48px;" width="20" height="19" viewBox="0 0 20 19"><circle cx="12.4" cy="7.6" r="6.8" fill="none" stroke="#4a4a4a" stroke-width="1"/><path d="M7.6 12.6L0.8 18.6" stroke="#4a4a4a" stroke-width="1.1"/></svg>
<span class="t" style="left:1112.60px;top:70.05px;font-size:8.5px;line-height:11px;color:#1f1f1f;letter-spacing:-0.397px;">Suchen und</span>
<span class="t" style="left:1111.00px;top:81.05px;font-size:8.5px;line-height:11px;color:#1f1f1f;letter-spacing:-0.398px;">Auswählen</span>
<svg style="left:1151.6px;top:85.2px;" width="4" height="3" viewBox="0 0 4 3"><path d="M0.3 0.4L2 2.1L3.7 0.4" fill="none" stroke="#555" stroke-width="0.8"/></svg>
<span class="t" style="left:1052.60px;top:95.90px;font-size:8.2px;line-height:11px;color:#555;letter-spacing:-0.326px;">Bearbeiten</span>
<div style="left:1163.5px;top:47px;width:1px;height:57px;background:#e4e4e4;"></div>
<svg style="left:1175.5px;top:47.5px;" width="15.5" height="19.5" viewBox="0 0 15.5 19.5"><path d="M7 0.6L1.4 10.2H6.2L2.8 18.8L13.6 7H8.8L13.4 0.6Z" fill="#6aa5e0" stroke="#3b7ac2" stroke-width="0.9" stroke-linejoin="round"/></svg>
<span class="t" style="left:1173.00px;top:70.05px;font-size:8.5px;line-height:11px;color:#1f1f1f;letter-spacing:-0.454px;">Ideen</span>
<span class="t" style="left:1173.00px;top:95.90px;font-size:8.2px;line-height:11px;color:#555;letter-spacing:-0.304px;">Ideen</span>
<div style="left:1202px;top:47px;width:1px;height:57px;background:#e4e4e4;"></div>
<svg style="left:1267.5px;top:100px;" width="7" height="4.5" viewBox="0 0 7 4.5"><path d="M0.5 4L3.5 1L6.5 4" fill="none" stroke="#555" stroke-width="0.9"/></svg>
<div style="left:0px;top:138.5px;width:1280px;height:521.5px;background:#fff;"></div>
<div style="left:195px;top:139px;width:1px;height:521px;background:#dfdfdf;"></div>
<div style="left:458px;top:139px;width:1px;height:521px;background:#dfdfdf;"></div>
<div style="left:544px;top:139px;width:1px;height:521px;background:#dfdfdf;"></div>
<div style="left:629px;top:139px;width:1px;height:521px;background:#dfdfdf;"></div>
<div style="left:714px;top:139px;width:1px;height:521px;background:#dfdfdf;"></div>
<div style="left:800px;top:139px;width:1px;height:521px;background:#dfdfdf;"></div>
<div style="left:885px;top:139px;width:1px;height:521px;background:#dfdfdf;"></div>
<div style="left:971px;top:139px;width:1px;height:521px;background:#dfdfdf;"></div>
<div style="left:1056px;top:139px;width:1px;height:521px;background:#dfdfdf;"></div>
<div style="left:1142px;top:139px;width:1px;height:521px;background:#dfdfdf;"></div>
<div style="left:1227px;top:139px;width:1px;height:521px;background:#dfdfdf;"></div>
<div style="left:0px;top:179px;width:1265.5px;height:1px;background:#dfdfdf;"></div>
<div style="left:0px;top:200px;width:1265.5px;height:1px;background:#dfdfdf;"></div>
<div style="left:0px;top:221px;width:1265.5px;height:1px;background:#dfdfdf;"></div>
<div style="left:0px;top:243px;width:1265.5px;height:1px;background:#dfdfdf;"></div>
<div style="left:0px;top:264px;width:1265.5px;height:1px;background:#dfdfdf;"></div>
<div style="left:0px;top:285px;width:1265.5px;height:1px;background:#dfdfdf;"></div>
<div style="left:0px;top:307px;width:1265.5px;height:1px;background:#dfdfdf;"></div>
<div style="left:0px;top:328px;width:1265.5px;height:1px;background:#dfdfdf;"></div>
<div style="left:0px;top:349px;width:1265.5px;height:1px;background:#dfdfdf;"></div>
<div style="left:0px;top:371px;width:1265.5px;height:1px;background:#dfdfdf;"></div>
<div style="left:0px;top:392px;width:1265.5px;height:1px;background:#dfdfdf;"></div>
<div style="left:0px;top:413px;width:1265.5px;height:1px;background:#dfdfdf;"></div>
<div style="left:0px;top:435px;width:1265.5px;height:1px;background:#dfdfdf;"></div>
<div style="left:0px;top:456px;width:1265.5px;height:1px;background:#dfdfdf;"></div>
<div style="left:0px;top:477px;width:1265.5px;height:1px;background:#dfdfdf;"></div>
<div style="left:0px;top:499px;width:1265.5px;height:1px;background:#dfdfdf;"></div>
<div style="left:0px;top:520px;width:1265.5px;height:1px;background:#dfdfdf;"></div>
<div style="left:0px;top:541px;width:1265.5px;height:1px;background:#dfdfdf;"></div>
<div style="left:0px;top:563px;width:1265.5px;height:1px;background:#dfdfdf;"></div>
<div style="left:0px;top:584px;width:1265.5px;height:1px;background:#dfdfdf;"></div>
<div style="left:0px;top:605px;width:1265.5px;height:1px;background:#dfdfdf;"></div>
<div style="left:0px;top:627px;width:1265.5px;height:1px;background:#dfdfdf;"></div>
<div style="left:0px;top:648px;width:1265.5px;height:1px;background:#dfdfdf;"></div>
<div style="left:0px;top:157px;width:28px;height:1px;background:#d0d0d0;"></div>
<div style="left:28px;top:157px;width:1237.5px;height:1px;background:#9b9b9b;"></div>
<div style="left:28px;top:139px;width:1px;height:521px;background:#c6c6c6;"></div>
<div style="left:29px;top:139px;width:1236.5px;height:18px;background:rgba(255,255,255,0.45);"></div>
<div style="left:1265.5px;top:139px;width:1px;height:521px;background:#a6a6a6;"></div>
<svg style="left:13px;top:141px;" width="14" height="14" viewBox="0 0 14 14"><path d="M13.5 0.5V13.5H0.5Z" fill="#d2d2d2"/></svg>
<span class="t" style="left:107.75px;top:140.80px;font-size:12.6px;line-height:16px;color:#3c3c3c;">B</span>
<span class="t" style="left:322.25px;top:140.80px;font-size:12.6px;line-height:16px;color:#3c3c3c;">C</span>
<span class="t" style="left:496.37px;top:140.80px;font-size:12.6px;line-height:16px;color:#3c3c3c;">D</span>
<span class="t" style="left:582.14px;top:140.80px;font-size:12.6px;line-height:16px;color:#3c3c3c;">E</span>
<span class="t" style="left:667.93px;top:140.80px;font-size:12.6px;line-height:16px;color:#3c3c3c;">F</span>
<span class="t" style="left:752.30px;top:140.80px;font-size:12.6px;line-height:16px;color:#3c3c3c;">G</span>
<span class="t" style="left:838.09px;top:140.80px;font-size:12.6px;line-height:16px;color:#3c3c3c;">H</span>
<span class="t" style="left:926.31px;top:140.80px;font-size:12.6px;line-height:16px;color:#3c3c3c;">I</span>
<span class="t" style="left:1010.35px;top:140.80px;font-size:12.6px;line-height:16px;color:#3c3c3c;">J</span>
<span class="t" style="left:1094.72px;top:140.80px;font-size:12.6px;line-height:16px;color:#3c3c3c;">K</span>
<span class="t" style="left:1180.85px;top:140.80px;font-size:12.6px;line-height:16px;color:#3c3c3c;">L</span>
<span class="t" style="left:1261.80px;top:140.80px;font-size:12.6px;line-height:16px;color:#3c3c3c;">I</span>
<span class="t" style="left:10.64px;top:160.17px;font-size:12.8px;line-height:17px;color:#3c3c3c;">1</span>
<span class="t" style="left:10.64px;top:181.50px;font-size:12.8px;line-height:17px;color:#3c3c3c;">2</span>
<span class="t" style="left:10.64px;top:202.83px;font-size:12.8px;line-height:17px;color:#3c3c3c;">3</span>
<span class="t" style="left:10.64px;top:224.17px;font-size:12.8px;line-height:17px;color:#3c3c3c;">4</span>
<span class="t" style="left:10.64px;top:245.50px;font-size:12.8px;line-height:17px;color:#3c3c3c;">5</span>
<span class="t" style="left:10.64px;top:266.83px;font-size:12.8px;line-height:17px;color:#3c3c3c;">6</span>
<span class="t" style="left:10.64px;top:288.16px;font-size:12.8px;line-height:17px;color:#3c3c3c;">7</span>
<span class="t" style="left:10.64px;top:309.50px;font-size:12.8px;line-height:17px;color:#3c3c3c;">8</span>
<span class="t" style="left:10.64px;top:330.83px;font-size:12.8px;line-height:17px;color:#3c3c3c;">9</span>
<span class="t" style="left:7.80px;top:352.16px;font-size:12.8px;line-height:17px;color:#3c3c3c;letter-spacing:-0.318px;">10</span>
<span class="t" style="left:7.80px;top:373.50px;font-size:12.8px;line-height:17px;color:#3c3c3c;letter-spacing:0.157px;">11</span>
<span class="t" style="left:7.80px;top:394.83px;font-size:12.8px;line-height:17px;color:#3c3c3c;letter-spacing:-0.318px;">12</span>
<span class="t" style="left:7.80px;top:416.16px;font-size:12.8px;line-height:17px;color:#3c3c3c;letter-spacing:-0.318px;">13</span>
<span class="t" style="left:7.80px;top:437.50px;font-size:12.8px;line-height:17px;color:#3c3c3c;letter-spacing:-0.318px;">14</span>
<span class="t" style="left:7.80px;top:458.83px;font-size:12.8px;line-height:17px;color:#3c3c3c;letter-spacing:-0.318px;">15</span>
<span class="t" style="left:7.80px;top:480.16px;font-size:12.8px;line-height:17px;color:#3c3c3c;letter-spacing:-0.318px;">16</span>
<span class="t" style="left:7.80px;top:501.49px;font-size:12.8px;line-height:17px;color:#3c3c3c;letter-spacing:-0.318px;">17</span>
<span class="t" style="left:7.80px;top:522.83px;font-size:12.8px;line-height:17px;color:#3c3c3c;letter-spacing:-0.318px;">18</span>
<span class="t" style="left:7.80px;top:544.16px;font-size:12.8px;line-height:17px;color:#3c3c3c;letter-spacing:-0.318px;">19</span>
<span class="t" style="left:7.80px;top:565.49px;font-size:12.8px;line-height:17px;color:#3c3c3c;letter-spacing:-0.318px;">20</span>
<span class="t" style="left:7.80px;top:586.83px;font-size:12.8px;line-height:17px;color:#3c3c3c;letter-spacing:-0.318px;">21</span>
<span class="t" style="left:7.80px;top:608.16px;font-size:12.8px;line-height:17px;color:#3c3c3c;letter-spacing:-0.318px;">22</span>
<span class="t" style="left:7.80px;top:629.49px;font-size:12.8px;line-height:17px;color:#3c3c3c;letter-spacing:-0.318px;">23</span>
<span class="t" style="left:7.80px;top:650.83px;font-size:12.8px;line-height:17px;color:#3c3c3c;letter-spacing:-0.318px;">24</span>
<div style="left:29px;top:200.066px;width:429px;height:170.664px;background:#fff;"></div>
<div style="left:29px;top:200.066px;width:429.4px;height:21.333px;background:#d9e1f2;"></div>
<div style="left:29px;top:220.599px;width:429.4px;height:1.2px;background:#9fb4dc;"></div>
<div style="left:29px;top:349.397px;width:429.4px;height:21.333px;background:#d9e1f2;"></div>
<div style="left:29px;top:348.997px;width:429.4px;height:1.2px;background:#9fb4dc;"></div>
<span class="t" style="left:31.00px;top:202.63px;font-size:14.2px;line-height:18px;color:#111;font-weight:700;letter-spacing:-0.479px;">Zeilenbeschriftungen</span>
<span class="t" style="left:198.00px;top:202.63px;font-size:14.2px;line-height:18px;color:#111;font-weight:700;letter-spacing:-0.500px;">Summe von Stückzahl Volumen in Stk.</span>
<span class="t" style="left:31.00px;top:223.97px;font-size:14.2px;line-height:18px;color:#111;letter-spacing:-0.150px;">Dichtungselemente</span>
<span class="t" style="left:407.80px;top:223.97px;font-size:14.2px;line-height:18px;color:#111;">97.668</span>
<span class="t" style="left:31.00px;top:245.30px;font-size:14.2px;line-height:18px;color:#111;letter-spacing:-0.155px;">Drahtgewindeeinsätze</span>
<span class="t" style="left:407.80px;top:245.30px;font-size:14.2px;line-height:18px;color:#111;">79.566</span>
<span class="t" style="left:31.00px;top:266.63px;font-size:14.2px;line-height:18px;color:#111;letter-spacing:0.623px;">Muttern</span>
<span class="t" style="left:399.50px;top:266.63px;font-size:14.2px;line-height:18px;color:#111;letter-spacing:0.054px;">121.506</span>
<span class="t" style="left:31.00px;top:287.96px;font-size:14.2px;line-height:18px;color:#111;letter-spacing:-0.464px;">Scheiben</span>
<span class="t" style="left:407.80px;top:287.96px;font-size:14.2px;line-height:18px;color:#111;">64.329</span>
<span class="t" style="left:31.00px;top:309.30px;font-size:14.2px;line-height:18px;color:#111;letter-spacing:-0.247px;">Sicherungselemente</span>
<span class="t" style="left:407.80px;top:309.30px;font-size:14.2px;line-height:18px;color:#111;">80.409</span>
<span class="t" style="left:31.00px;top:330.63px;font-size:14.2px;line-height:18px;color:#111;letter-spacing:-0.354px;">Spannhülsen</span>
<span class="t" style="left:407.80px;top:330.63px;font-size:14.2px;line-height:18px;color:#111;">80.157</span>
<span class="t" style="left:31.00px;top:351.96px;font-size:14.2px;line-height:18px;color:#111;font-weight:700;letter-spacing:-0.519px;">Gesamtergebnis</span>
<span class="t" style="left:399.40px;top:351.96px;font-size:14.2px;line-height:18px;color:#111;font-weight:700;letter-spacing:0.097px;">523.635</span>
<div style="left:183.7px;top:208px;width:11.3px;height:12px;background:linear-gradient(#fdfdfd,#e9e9e9);border:1px solid #b7b7b7;"></div>
<svg style="left:186.8px;top:212.5px;" width="5" height="4" viewBox="0 0 5 4"><path d="M0.2 0.5H4.8L2.5 3.2Z" fill="#555"/></svg>
<div style="left:479.4px;top:179.4px;width:205.6px;height:283.2px;background:#fff;border:1px solid #687384;"></div>
<span class="t" style="left:488.90px;top:185.50px;font-size:13.2px;line-height:17px;color:#111;font-weight:700;letter-spacing:-0.382px;">Schicht</span>
<svg style="left:621.9px;top:186px;" width="16" height="16" viewBox="0 0 16 16"><path d="M0.3 2.9L2.4 5L6.9 0.4" fill="none" stroke="#3c3c3c" stroke-width="0.95"/><path d="M8.3 3.7H16" stroke="#3c3c3c" stroke-width="1.1"/><path d="M0.3 8.2L2.4 10.3L6.9 5.7" fill="none" stroke="#3c3c3c" stroke-width="0.95"/><path d="M8.3 9H16" stroke="#3c3c3c" stroke-width="1.1"/><path d="M0.3 13.5L2.4 15.6L6.9 11" fill="none" stroke="#3c3c3c" stroke-width="0.95"/><path d="M8.3 14.3H16" stroke="#3c3c3c" stroke-width="1.1"/></svg>
<svg style="left:655px;top:186px;" width="16.5" height="16.5" viewBox="0 0 16.5 16.5"><path d="M0.4 0.5H15L9.4 7.6V15.6H5.8V7.6Z" fill="#dcdcdc" stroke="#cdcdcd" stroke-width="0.9"/><path d="M10.2 9.6L16 16M16 9.6L10.2 16" stroke="#cdcdcd" stroke-width="0.8"/></svg>
<div style="left:488.9px;top:208.5px;width:186px;height:1px;background:#c8d3ea;"></div>
<div style="left:487.9px;top:212.4px;width:188px;height:30.3px;background:#eef3fb;"></div>
<div style="left:488.9px;top:214.4px;width:186px;height:26.3px;background:#4472c4;border-radius:2px;border:1px solid #3d68b6;"></div>
<span class="t" style="left:498.20px;top:219.60px;font-size:13.6px;line-height:18px;color:#fff;letter-spacing:0.156px;">Frühschicht</span>
<div style="left:487.9px;top:243.1px;width:188px;height:30.3px;background:#eef3fb;"></div>
<div style="left:488.9px;top:245.1px;width:186px;height:26.3px;background:#4472c4;border-radius:2px;border:1px solid #3d68b6;"></div>
<span class="t" style="left:498.20px;top:250.30px;font-size:13.6px;line-height:18px;color:#fff;letter-spacing:0.221px;">Nachtschicht</span>
<div style="left:487.9px;top:273.8px;width:188px;height:30.3px;background:#eef3fb;"></div>
<div style="left:488.9px;top:275.8px;width:186px;height:26.3px;background:#4472c4;border-radius:2px;border:1px solid #3d68b6;"></div>
<span class="t" style="left:498.20px;top:281.00px;font-size:13.6px;line-height:18px;color:#fff;letter-spacing:0.064px;">Spätschicht</span>
<div style="left:694.2px;top:179.4px;width:205.6px;height:282.8px;background:#fff;border:1px solid #687a96;"></div>
<span class="t" style="left:703.70px;top:185.50px;font-size:13.2px;line-height:17px;color:#111;font-weight:700;letter-spacing:0.076px;">Produktions-leiter</span>
<svg style="left:836.7px;top:186px;" width="16" height="16" viewBox="0 0 16 16"><path d="M0.3 2.9L2.4 5L6.9 0.4" fill="none" stroke="#3c3c3c" stroke-width="0.95"/><path d="M8.3 3.7H16" stroke="#3c3c3c" stroke-width="1.1"/><path d="M0.3 8.2L2.4 10.3L6.9 5.7" fill="none" stroke="#3c3c3c" stroke-width="0.95"/><path d="M8.3 9H16" stroke="#3c3c3c" stroke-width="1.1"/><path d="M0.3 13.5L2.4 15.6L6.9 11" fill="none" stroke="#3c3c3c" stroke-width="0.95"/><path d="M8.3 14.3H16" stroke="#3c3c3c" stroke-width="1.1"/></svg>
<svg style="left:869.8px;top:186px;" width="16.5" height="16.5" viewBox="0 0 16.5 16.5"><path d="M0.4 0.5H15L9.4 7.6V15.6H5.8V7.6Z" fill="#dcdcdc" stroke="#cdcdcd" stroke-width="0.9"/><path d="M10.2 9.6L16 16M16 9.6L10.2 16" stroke="#cdcdcd" stroke-width="0.8"/></svg>
<div style="left:703.7px;top:208.6px;width:186px;height:1px;background:#d5dcea;"></div>
<div style="left:703.7px;top:214.4px;width:186px;height:26.3px;background:#b4c6e7;border-radius:2px;border:1px solid #a3b4d6;"></div>
<span class="t" style="left:713.50px;top:219.90px;font-size:13.6px;line-height:18px;color:#16161e;">A</span>
<div style="left:703.7px;top:245.1px;width:186px;height:26.3px;background:#b4c6e7;border-radius:2px;border:1px solid #a3b4d6;"></div>
<span class="t" style="left:713.50px;top:250.60px;font-size:13.6px;line-height:18px;color:#16161e;">B</span>
<div style="left:703.7px;top:275.8px;width:186px;height:26.3px;background:#b4c6e7;border-radius:2px;border:1px solid #a3b4d6;"></div>
<span class="t" style="left:713.50px;top:281.30px;font-size:13.6px;line-height:18px;color:#16161e;">C</span>
<div style="left:703.7px;top:306.5px;width:186px;height:26.3px;background:#b4c6e7;border-radius:2px;border:1px solid #a3b4d6;"></div>
<span class="t" style="left:713.50px;top:312.00px;font-size:13.6px;line-height:18px;color:#16161e;letter-spacing:0.816px;">Vertreter</span>
<div style="left:905px;top:178.6px;width:206px;height:282px;background:#fff;border:1px solid #687a96;"></div>
<span class="t" style="left:914.50px;top:184.70px;font-size:13.2px;line-height:17px;color:#111;font-weight:700;letter-spacing:-0.791px;">Ausschuss</span>
<svg style="left:1047.5px;top:185.2px;" width="16" height="16" viewBox="0 0 16 16"><path d="M0.3 2.9L2.4 5L6.9 0.4" fill="none" stroke="#3c3c3c" stroke-width="0.95"/><path d="M8.3 3.7H16" stroke="#3c3c3c" stroke-width="1.1"/><path d="M0.3 8.2L2.4 10.3L6.9 5.7" fill="none" stroke="#3c3c3c" stroke-width="0.95"/><path d="M8.3 9H16" stroke="#3c3c3c" stroke-width="1.1"/><path d="M0.3 13.5L2.4 15.6L6.9 11" fill="none" stroke="#3c3c3c" stroke-width="0.95"/><path d="M8.3 14.3H16" stroke="#3c3c3c" stroke-width="1.1"/></svg>
<svg style="left:1080.6px;top:185.2px;" width="16.5" height="16.5" viewBox="0 0 16.5 16.5"><path d="M0.4 0.5H15L9.4 7.6V15.6H5.8V7.6Z" fill="#dcdcdc" stroke="#cdcdcd" stroke-width="0.9"/><path d="M10.2 9.6L16 16M16 9.6L10.2 16" stroke="#cdcdcd" stroke-width="0.8"/></svg>
<div style="left:914.5px;top:207.2px;width:186px;height:1px;background:#596780;"></div>
<div style="left:914.5px;top:212.2px;width:186px;height:26.3px;background:#b4c6e7;border-radius:2px;border:1px solid #a3b4d6;"></div>
<span class="t" style="left:924.30px;top:217.70px;font-size:13.6px;line-height:18px;color:#16161e;letter-spacing:-1.431px;">Ja</span>
<div style="left:914.5px;top:242.9px;width:186px;height:26.3px;background:#b4c6e7;border-radius:2px;border:1px solid #a3b4d6;"></div>
<span class="t" style="left:924.30px;top:248.40px;font-size:13.6px;line-height:18px;color:#16161e;letter-spacing:0.008px;">Nein</span>
<div style="left:593px;top:464.6px;width:374.6px;height:154.4px;background:#fff;border:1.3px solid #c3d0ea;box-shadow:0 0 1.5px #cdd7ee;"></div>
<span class="t" style="left:601.70px;top:470.10px;font-size:13.4px;line-height:17px;color:#111;font-weight:700;letter-spacing:0.122px;">Datum</span>
<div style="left:601.5px;top:491.2px;width:356.7px;height:1px;background:#4c5870;"></div>
<svg style="left:941.2px;top:469.8px;" width="17" height="16" viewBox="0 0 17 16"><path d="M0.6 0.8H12.2L7.8 5.6H5Z" fill="#555" stroke="#4a4a4a" stroke-width="0.7" stroke-linejoin="round"/><path d="M5 5.4V11L7.8 12.2V5.4" fill="#fff" stroke="#5a5a5a" stroke-width="0.8"/><path d="M8.6 8.8L16 15.6M15.8 9.4L8.8 15.6" stroke="#d8452e" stroke-width="0.85"/></svg>
<span class="t" style="left:601.70px;top:498.60px;font-size:12.4px;line-height:16px;color:#4b586e;letter-spacing:0.147px;">Q3 2019</span>
<span class="t" style="left:883.60px;top:499.90px;font-size:10.8px;line-height:14px;color:#8a8a8a;letter-spacing:-0.352px;">QUARTALE</span>
<svg style="left:946.8px;top:504.8px;" width="6" height="4" viewBox="0 0 6 4"><path d="M0.2 0.4H5.8L3 3.4Z" fill="#9a9a9a"/></svg>
<span class="t" style="left:603.00px;top:522.80px;font-size:11.6px;line-height:15px;color:#858585;letter-spacing:0.049px;">2019</span>
<span class="t" style="left:749.70px;top:522.80px;font-size:11.6px;line-height:15px;color:#858585;letter-spacing:0.049px;">2020</span>
<span class="t" style="left:603.00px;top:545.30px;font-size:11.6px;line-height:15px;color:#858585;letter-spacing:-0.437px;">Q1</span>
<span class="t" style="left:638.60px;top:545.30px;font-size:11.6px;line-height:15px;color:#858585;letter-spacing:-0.437px;">Q2</span>
<span class="t" style="left:675.30px;top:545.30px;font-size:11.6px;line-height:15px;color:#858585;letter-spacing:-0.437px;">Q3</span>
<span class="t" style="left:712.20px;top:545.30px;font-size:11.6px;line-height:15px;color:#858585;letter-spacing:-0.437px;">Q4</span>
<span class="t" style="left:749.70px;top:545.30px;font-size:11.6px;line-height:15px;color:#858585;letter-spacing:-0.437px;">Q1</span>
<span class="t" style="left:785.80px;top:545.30px;font-size:11.6px;line-height:15px;color:#858585;letter-spacing:-0.437px;">Q2</span>
<span class="t" style="left:822.80px;top:545.30px;font-size:11.6px;line-height:15px;color:#858585;letter-spacing:-0.437px;">Q3</span>
<span class="t" style="left:860.00px;top:545.30px;font-size:11.6px;line-height:15px;color:#858585;letter-spacing:-0.437px;">Q4</span>
<div style="left:601px;top:564.2px;width:34px;height:17.6px;background:#d8d8d8;"></div>
<div style="left:637.2px;top:564.2px;width:34.8px;height:17.6px;background:#d8d8d8;"></div>
<div style="left:673.9px;top:564.2px;width:36.6px;height:17.6px;background:linear-gradient(#a9bce6,#4b71c4);"></div>
<div style="left:712.2px;top:564.2px;width:33.3px;height:17.6px;background:#d8d8d8;"></div>
<div style="left:747.8px;top:564.2px;width:34.7px;height:17.6px;background:#d8d8d8;"></div>
<div style="left:785px;top:564.2px;width:34.2px;height:17.6px;background:#d8d8d8;"></div>
<div style="left:821px;top:564.2px;width:35.7px;height:17.6px;background:#d8d8d8;"></div>
<div style="left:858.9px;top:564.2px;width:34.1px;height:17.6px;background:#d8d8d8;"></div>
<div style="left:601px;top:590.5px;width:16px;height:16.2px;background:#fff;border:1px solid #b4b4b4;"></div>
<svg style="left:606.4px;top:594.6px;" width="6" height="8" viewBox="0 0 6 8"><path d="M5.4 0.5V7.5L0.6 4Z" fill="#555"/></svg>
<div style="left:943.2px;top:590.5px;width:16px;height:16.2px;background:#fff;border:1px solid #b4b4b4;"></div>
<svg style="left:948.4px;top:594.6px;" width="6" height="8" viewBox="0 0 6 8"><path d="M0.6 0.5V7.5L5.4 4Z" fill="#555"/></svg>
<div style="left:699px;top:594.2px;width:41px;height:6.4px;background:#dcdfeb;"></div>
<div style="left:473.5px;top:173px;width:642.5px;height:451.5px;border:1px solid #bababa;"></div>
<div style="left:470.4px;top:169.9px;width:6.8px;height:6.8px;background:#fff;border:1px solid #7f7f7f;border-radius:50%;"></div>
<div style="left:791.4px;top:169.9px;width:6.8px;height:6.8px;background:#fff;border:1px solid #7f7f7f;border-radius:50%;"></div>
<div style="left:1112.3px;top:169.9px;width:6.8px;height:6.8px;background:#fff;border:1px solid #7f7f7f;border-radius:50%;"></div>
<div style="left:470.4px;top:395.2px;width:6.8px;height:6.8px;background:#fff;border:1px solid #7f7f7f;border-radius:50%;"></div>
<div style="left:1112.3px;top:395.2px;width:6.8px;height:6.8px;background:#fff;border:1px solid #7f7f7f;border-radius:50%;"></div>
<div style="left:470.4px;top:620.9px;width:6.8px;height:6.8px;background:#fff;border:1px solid #7f7f7f;border-radius:50%;"></div>
<div style="left:791.4px;top:620.9px;width:6.8px;height:6.8px;background:#fff;border:1px solid #7f7f7f;border-radius:50%;"></div>
<div style="left:1112.3px;top:620.9px;width:6.8px;height:6.8px;background:#fff;border:1px solid #7f7f7f;border-radius:50%;"></div>
<svg style="left:692.5px;top:355.5px;" width="11" height="11" viewBox="0 0 11 11"><path d="M5.5 0.4L7.3 2.4H6V5H8.6V3.7L10.6 5.5L8.6 7.3V6H6V8.6H7.3L5.5 10.6L3.7 8.6H5V6H2.4V7.3L0.4 5.5L2.4 3.7V5H5V2.4H3.7Z" fill="#222" stroke="#fff" stroke-width="0.5"/></svg>
<div style="left:1267px;top:139px;width:13px;height:521px;background:#f3f3f3;"></div>
<div style="left:1268.5px;top:139.5px;width:9.5px;height:520.5px;background:#fff;border:1px solid #c8c8c8;"></div>
<div style="left:1268.5px;top:139.5px;width:9.5px;height:10px;background:#fff;border:1px solid #b9b9b9;"></div>
<svg style="left:1270.6px;top:142.8px;" width="5" height="4" viewBox="0 0 5 4"><path d="M0.2 3.4H4.8L2.5 0.5Z" fill="#555"/></svg>
<div style="left:1268.5px;top:650px;width:9.5px;height:10px;background:#fff;border:1px solid #b9b9b9;"></div>
<svg style="left:1270.6px;top:653.4px;" width="5" height="4" viewBox="0 0 5 4"><path d="M0.2 0.5H4.8L2.5 3.4Z" fill="#555"/></svg>
<div style="left:0px;top:660px;width:1280px;height:19px;background:#f4f4f4;"></div>
<div style="left:0px;top:660px;width:1266px;height:1px;background:#a8a8a8;"></div>
<svg style="left:17.5px;top:666.5px;" width="3.5" height="5" viewBox="0 0 3.5 5"><path d="M3 0.4L0.6 2.5L3 4.6Z" fill="#d0d0d0"/></svg>
<svg style="left:36.5px;top:666.5px;" width="3.5" height="5" viewBox="0 0 3.5 5"><path d="M0.5 0.4L2.9 2.5L0.5 4.6Z" fill="#d0d0d0"/></svg>
<div style="left:66px;top:662px;width:1px;height:15px;background:#dcdcdc;"></div>
<span class="t" style="left:75.50px;top:664.05px;font-size:8.5px;line-height:11px;color:#333;letter-spacing:0.017px;">Rohdaten</span>
<div style="left:122.5px;top:660px;width:84.5px;height:16px;background:#fff;border-left:1px solid #c6c6c6;border-right:1px solid #c6c6c6;"></div>
<div style="left:122.5px;top:674.8px;width:84.5px;height:1.8px;background:#217346;"></div>
<span class="t" style="left:130.50px;top:663.65px;font-size:8.5px;line-height:11px;color:#217346;font-weight:700;letter-spacing:0.033px;">Pivot-Dashboard</span>
<svg style="left:228.5px;top:663.5px;" width="11" height="11" viewBox="0 0 11 11"><circle cx="5.5" cy="5.5" r="4.8" fill="none" stroke="#666" stroke-width="0.8"/><path d="M5.5 3V8M3 5.5H8" stroke="#666" stroke-width="0.8"/></svg>
<div style="left:767.8px;top:666.5px;width:1px;height:1px;background:#8f8f8f;"></div>
<div style="left:767.8px;top:669.3px;width:1px;height:1px;background:#8f8f8f;"></div>
<div style="left:767.8px;top:672px;width:1px;height:1px;background:#8f8f8f;"></div>
<div style="left:779px;top:664.5px;width:10.5px;height:10.5px;background:#fff;border:1px solid #c2c2c2;"></div>
<svg style="left:781.8px;top:667.4px;" width="4" height="5" viewBox="0 0 4 5"><path d="M3.5 0.3V4.7L0.5 2.5Z" fill="#555"/></svg>
<div style="left:789.5px;top:664.5px;width:467px;height:10.5px;background:#e8e8e8;"></div>
<div style="left:825.5px;top:664.5px;width:394px;height:10.5px;background:#fff;border:1px solid #c2c2c2;"></div>
<div style="left:1256.5px;top:664.5px;width:9.5px;height:10.5px;background:#fff;border:1px solid #c2c2c2;"></div>
<svg style="left:1259.4px;top:667.4px;" width="4" height="5" viewBox="0 0 4 5"><path d="M0.5 0.3V4.7L3.5 2.5Z" fill="#555"/></svg>
<div style="left:0px;top:678.6px;width:1280px;height:14.8px;background:#217346;"></div>
<svg style="left:5px;top:682px;" width="10.5" height="9" viewBox="0 0 10.5 9"><rect x="0.5" y="1" width="9" height="6.6" fill="none" stroke="#e9f3ee" stroke-width="0.9"/><circle cx="6.6" cy="5.6" r="2.4" fill="#217346" stroke="#e9f3ee" stroke-width="0.8"/><path d="M2 3H5" stroke="#e9f3ee" stroke-width="0.7"/></svg>
<div style="left:1078px;top:678.6px;width:26.5px;height:14.8px;background:#185c37;"></div>
<svg style="left:1086.5px;top:681px;" width="9.5" height="9" viewBox="0 0 9.5 9"><rect x="0.5" y="0.5" width="8.5" height="8" fill="none" stroke="#fff" stroke-width="0.9"/><path d="M0.5 3.2H9M0.5 5.9H9M3.3 0.5V8.5M6.2 0.5V8.5" stroke="#fff" stroke-width="0.8"/></svg>
<svg style="left:1113px;top:681px;" width="10" height="9" viewBox="0 0 10 9"><rect x="0.5" y="0.5" width="9" height="8" fill="none" stroke="#fff" stroke-width="0.9"/><rect x="3" y="2.4" width="4" height="4.2" fill="none" stroke="#fff" stroke-width="0.8"/><rect x="4.4" y="3.8" width="1.2" height="1.4" fill="#fff"/></svg>
<svg style="left:1140px;top:681px;" width="9.5" height="9" viewBox="0 0 9.5 9"><path d="M0.5 0.5H9V8.5H0.5Z" fill="none" stroke="#fff" stroke-width="0.9"/><path d="M3.2 0.5V5.4H9" fill="none" stroke="#fff" stroke-width="0.8"/><path d="M5.8 2V4" stroke="#dcebe2" stroke-width="0.7"/></svg>
<div style="left:1162.5px;top:685.8px;width:4.5px;height:1px;background:#d5e6dc;"></div>
<div style="left:1171px;top:685.8px;width:66px;height:1px;background:#d5e6dc;"></div>
<div style="left:1204.5px;top:683.6px;width:1px;height:5px;background:#d5e6dc;"></div>
<div style="left:1209px;top:682px;width:2.6px;height:8.4px;background:#fff;"></div>
<div style="left:1241px;top:685.8px;width:4.5px;height:1px;background:#d5e6dc;"></div>
<div style="left:1243px;top:684.3px;width:1px;height:4px;background:#7fae93;"></div>
<span class="t" style="left:1255.00px;top:681.70px;font-size:7.2px;line-height:9px;color:#fff;letter-spacing:-0.183px;">160 %</span>
<div style="left:0px;top:693.4px;width:1280px;height:26.6px;background:#000;"></div>
</div></body></html>
